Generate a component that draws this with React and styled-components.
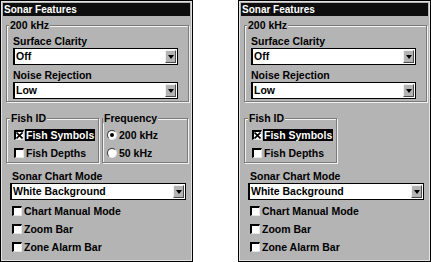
import React from 'react'
import styled, { createGlobalStyle } from 'styled-components'

const GlobalStyle = createGlobalStyle`
  html, body {
    margin: 0;
    padding: 0;
    background: #fff;
  }
  body {
    font-family: 'Liberation Sans', Arial, sans-serif;
  }
`

const Screen = styled.div`
  display: flex;
  gap: 45px;
  width: 431px;
  height: 262px;
`

const Panel = styled.div`
  box-sizing: border-box;
  width: 193px;
  height: 262px;
  padding: 2px;
  border: 1px solid #000;
  background: #b4b4b4;
  box-shadow: inset 1px 1px 0 #e2e2e2, inset -1px -1px 0 #e2e2e2;
  font: bold 10.5px 'Liberation Sans', Arial, sans-serif;
  color: #000;
`

const TitleBar = styled.div`
  height: 13px;
  padding-left: 1px;
  background: #0e0e0e;
  color: #fff;
  font-size: 10px;
  line-height: 13px;
`

const Group = styled.fieldset`
  box-sizing: border-box;
  min-width: 0;
  width: ${(p) => p.$w}px;
  margin: 0;
  padding: ${(p) => p.$pad || '6px 0 2px 6px'};
  border: 1px solid #7b7b7b;
  box-shadow: 1px 1px 0 #f2f2f2, inset 1px 1px 0 #f2f2f2;
`

const Legend = styled.legend`
  margin-left: -4px;
  padding: 0 1px;
  line-height: 10px;
  background: #b4b4b4;
`

const TopGroup = styled(Group)`
  margin: 4px 0 0 3px;
`

const GroupRow = styled.div`
  display: flex;
  gap: 3px;
  margin: 11px 0 0 3px;
`

const FieldLabel = styled.div`
  height: 11px;
  line-height: 11px;
  padding-left: ${(p) => p.$indent || 0}px;
  margin-top: ${(p) => p.$top || 0}px;
`

const Select = styled.div`
  box-sizing: border-box;
  display: flex;
  align-items: center;
  width: ${(p) => p.$w}px;
  height: 17px;
  margin-top: 1px;
  padding: 1px;
  background: #fff;
  border: 1px solid #000;
  border-left-width: 2px;
`

const SelectText = styled.span`
  flex: 1;
  line-height: 13px;
`

const ArrowButton = styled.span`
  box-sizing: border-box;
  display: flex;
  align-items: center;
  justify-content: center;
  width: 11px;
  height: 13px;
  background: #b4b4b4;
  border-top: 1px solid #f0f0f0;
  border-left: 1px solid #f0f0f0;
  border-right: 1px solid #4a4a4a;
  border-bottom: 1px solid #4a4a4a;

  &::after {
    content: '';
    border-left: 3px solid transparent;
    border-right: 3px solid transparent;
    border-top: 4px solid #000;
  }
`

const CheckRow = styled.div`
  display: flex;
  align-items: center;
  height: 18px;
`

const Box = styled.span`
  box-sizing: border-box;
  display: flex;
  width: 10px;
  height: 10px;
  margin-right: 1px;
  background: #fff;
  border-top: 2px solid #000;
  border-left: 2px solid #000;
  border-right: 1px solid #e6e6e6;
  border-bottom: 1px solid #e6e6e6;
`

const Radio = styled.span`
  box-sizing: border-box;
  display: flex;
  align-items: center;
  justify-content: center;
  width: 10px;
  height: 10px;
  margin-right: 1px;
  border-radius: 50%;
  background: #fff;
  border: 1px solid;
  border-color: #3a3a3a #ececec #ececec #3a3a3a;

  &::after {
    content: '';
    width: 4px;
    height: 4px;
    border-radius: 50%;
    background: ${(p) => (p.$on ? '#000' : 'transparent')};
  }
`

const ItemText = styled.span`
  padding: 0 1px;
  line-height: 12px;
  background: ${(p) => (p.$focus ? '#000' : 'transparent')};
  color: ${(p) => (p.$focus ? '#fff' : '#000')};
`

const Lower = styled.div`
  padding-left: 7px;
  margin-top: 8px;
`

const CheckList = styled.div`
  margin-top: 2px;
  padding-left: 2px;
`

function Dropdown({ value, width }) {
  return (
    <Select $w={width}>
      <SelectText>{value}</SelectText>
      <ArrowButton />
    </Select>
  )
}

function Check({ label, checked, focus }) {
  return (
    <CheckRow>
      <Box>
        {checked && (
          <svg width="7" height="7" viewBox="0 0 7 7">
            <path d="M0.5 0.5L6.5 6.5M6.5 0.5L0.5 6.5" stroke="#000" strokeWidth="1.6" />
          </svg>
        )}
      </Box>
      <ItemText $focus={focus}>{label}</ItemText>
    </CheckRow>
  )
}

function Option({ label, on }) {
  return (
    <CheckRow>
      <Radio $on={on} />
      <ItemText>{label}</ItemText>
    </CheckRow>
  )
}

function SonarPanel({ showFrequency }) {
  return (
    <Panel>
      <TitleBar>Sonar Features</TitleBar>
      <TopGroup $w={183}>
        <Legend>200 kHz</Legend>
        <FieldLabel>Surface Clarity</FieldLabel>
        <Dropdown value="Off" width={165} />
        <FieldLabel $top={5}>Noise Rejection</FieldLabel>
        <Dropdown value="Low" width={165} />
      </TopGroup>
      <GroupRow>
        <Group $w={93} $pad="3px 0 0 7px">
          <Legend>Fish ID</Legend>
          <Check label="Fish Symbols" checked focus />
          <Check label="Fish Depths" />
        </Group>
        {showFrequency && (
          <Group $w={86} $pad="3px 0 0 4px">
            <Legend>Frequency</Legend>
            <Option label="200 kHz" on />
            <Option label="50 kHz" />
          </Group>
        )}
      </GroupRow>
      <Lower>
        <FieldLabel $indent={2}>Sonar Chart Mode</FieldLabel>
        <Dropdown value="White Background" width={176} />
        <CheckList>
          <Check label="Chart Manual Mode" />
          <Check label="Zoom Bar" />
          <Check label="Zone Alarm Bar" />
        </CheckList>
      </Lower>
    </Panel>
  )
}

export default function App() {
  return (
    <>
      <GlobalStyle />
      <Screen>
        <SonarPanel showFrequency />
        <SonarPanel />
      </Screen>
    </>
  )
}
